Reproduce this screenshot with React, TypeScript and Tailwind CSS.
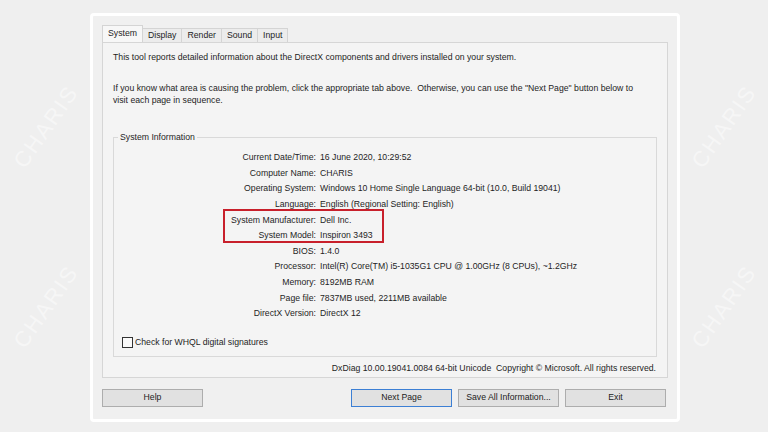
import React from "react"

const rows: [string, string][] = [
  ["Current Date/Time:", "16 June 2020, 10:29:52"],
  ["Computer Name:", "CHARIS"],
  ["Operating System:", "Windows 10 Home Single Language 64-bit (10.0, Build 19041)"],
  ["Language:", "English (Regional Setting: English)"],
  ["System Manufacturer:", "Dell Inc."],
  ["System Model:", "Inspiron 3493"],
  ["BIOS:", "1.4.0"],
  ["Processor:", "Intel(R) Core(TM) i5-1035G1 CPU @ 1.00GHz (8 CPUs), ~1.2GHz"],
  ["Memory:", "8192MB RAM"],
  ["Page file:", "7837MB used, 2211MB available"],
  ["DirectX Version:", "DirectX 12"],
]

const tabs = ["System", "Display", "Render", "Sound", "Input"]

// faint diagonal watermark, in the grey margins
const marks = [
  { x: -4, y: 110 },
  { x: -4, y: 290 },
  { x: 674, y: 110 },
  { x: 674, y: 290 },
]

function Button({ label, primary }: { label: string; primary?: boolean }) {
  return (
    <div
      className={
        "w-[101px] h-[18px] flex items-center justify-center bg-[#e1e1e1] border text-[#222] " +
        (primary ? "border-[#3c7fd4]" : "border-[#adadad]")
      }
    >
      {label}
    </div>
  )
}

export default function App() {
  return (
    <div
      className="relative w-[768px] h-[432px] overflow-hidden bg-[#efefef] text-[8.7px] text-[#1e1e1e]"
      style={{ fontFamily: '"Liberation Sans", Arial, sans-serif' }}
    >
      {/* watermark */}
      {marks.map((m, i) => (
        <div
          key={i}
          className="absolute w-[100px] text-center text-[22px] font-light tracking-[2px] text-white/45 -rotate-[55deg] pointer-events-none select-none"
          style={{ left: m.x, top: m.y }}
        >
          CHARIS
        </div>
      ))}
      <div className="relative ml-[90px] mt-[13px] w-[590px] h-[409px] border-[3px] border-white rounded-[4px] bg-[#f0f0f0] pl-[9px] pr-[8px] pt-[10px]">
        {/* tabs */}
        <div className="flex items-end h-[16px]">
          {tabs.map((t, i) => (
            <div
              key={t}
              className={
                i === 0
                  ? "h-[17px] px-[5px] flex items-center bg-[#f7f7f7] border border-b-0 border-[#d4d4d4] relative z-10"
                  : "h-[14px] px-[5px] flex items-center bg-[#ececec] border border-b-0 border-l-0 border-[#d4d4d4]"
              }
            >
              {t}
            </div>
          ))}
        </div>
        {/* panel */}
        <div className="w-[566px] h-[336px] border border-[#d6d6d6] bg-[#f4f4f4] px-[10px] pt-[8px]">
          <p className="leading-[12px]">
            This tool reports detailed information about the DirectX components and drivers installed on your system.
          </p>
          <p className="mt-[19px] leading-[12px] w-[532px]">
            If you know what area is causing the problem, click the appropriate tab above.&nbsp; Otherwise, you can use the "Next Page" button below to visit each page in sequence.
          </p>
          {/* group box */}
          <div className="relative mt-[31px] w-[544px] h-[220px] border border-[#d9d9d9]">
            <div className="absolute -top-[7px] left-[4px] px-[2px] bg-[#f4f4f4] leading-[12px]">System Information</div>
            <div className="relative mt-[12px]">
              {rows.map(([k, v]) => (
                <div key={k} className="flex h-[15.6px] items-center">
                  <div className="w-[202px] text-right">{k}</div>
                  <div className="ml-[4px] whitespace-nowrap">{v}</div>
                </div>
              ))}
              <div className="absolute left-[109px] top-[59px] w-[161px] h-[34px] border-[2.5px] border-[#c8202b]" />
            </div>
            <div className="flex items-center mt-[14px] ml-[8px]">
              <div className="w-[11px] h-[11px] border border-[#333] bg-[#fafafa]" />
              <span className="ml-[2px]">Check for WHQL digital signatures</span>
            </div>
          </div>
          <div className="mt-[5px] text-right pr-[1px] leading-[12px]">
            DxDiag 10.00.19041.0084 64-bit Unicode&nbsp; Copyright © Microsoft. All rights reserved.
          </div>
        </div>
        {/* buttons */}
        <div className="flex mt-[11px]">
          <Button label="Help" />
          <div className="flex ml-auto gap-[6px] mr-[3px]">
            <Button label="Next Page" primary />
            <Button label="Save All Information..." />
            <Button label="Exit" />
          </div>
        </div>
      </div>
    </div>
  )
}
